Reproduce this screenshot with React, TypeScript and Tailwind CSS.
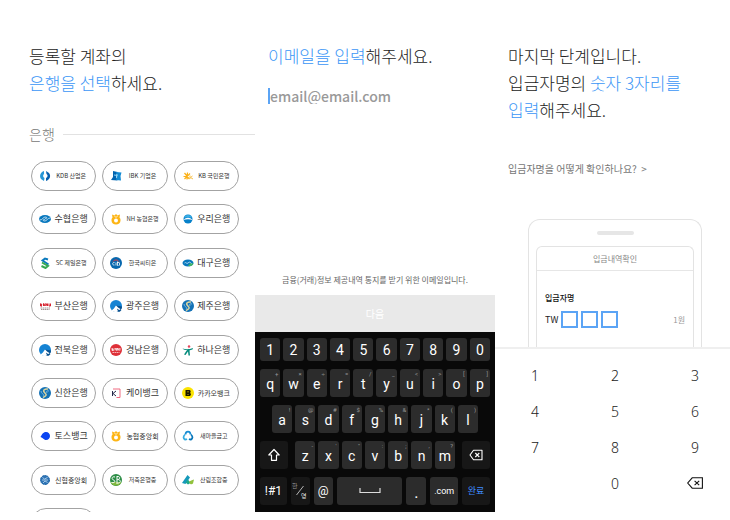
import type { ReactNode } from "react";
import clsx from "clsx";

type Bank = {
  name: string;
  size: "lg" | "md" | "sm";
  logo: ReactNode;
};

const textSizes = {
  lg: "text-[9px]",
  md: "text-[7px]",
  sm: "text-[6px]",
};

function Logo({ children }: { children: ReactNode }) {
  return (
    <svg viewBox="0 0 24 24" className="h-3 w-3 shrink-0" aria-hidden="true">
      {children}
    </svg>
  );
}

const nhLogo = (
  <Logo>
    <path
      d="M4 3l5 2 3-3 3 3 5-2-1 6c2 2 2 4 2 6 0 5-4 8-9 8s-9-3-9-8c0-2 0-4 2-6z"
      fill="#fdb515"
    />
    <circle cx="12" cy="15" r="4" fill="#fff" />
    <path d="M9 6l3 3 3-3" stroke="#fff" strokeWidth="1.5" fill="none" />
  </Logo>
);

const jbLogo = (
  <Logo>
    <circle cx="12" cy="12" r="12" fill="#1583d3" />
    <path d="M12 11l12 2c0 6-5 11-11 11z" fill="#07508f" />
    <path d="M3 21c4-2 6-6 9-10 3 3 5 5 9 7-2 3-4 5-8 6-4 0-7-1-10-3z" fill="#fff" />
    <path d="M14 17c2 2 5 3 9 4l-5 3c-2-2-4-4-4-7z" fill="#07508f" />
  </Logo>
);

const shinhanLogo = (
  <Logo>
    <circle cx="12" cy="12" r="12" fill="#1472b6" />
    <path
      d="M18 4C11 3 7 7 11 11s6 6-3 10"
      stroke="#d9d4a0"
      strokeWidth="3"
      fill="none"
    />
    <path d="M4 8c0 5 5 5 6 10M20 8c-4-1-6 0-4 4" stroke="#9ccbe8" strokeWidth="1.5" fill="none" />
  </Logo>
);

const banks: Bank[] = [
  {
    name: "KDB 산업은",
    size: "sm",
    logo: (
      <Logo>
        <path d="M10 2C3 4 0 12 4 18l6 4 1-6c-3-2-4-5-1-8z" fill="#2596d6" />
        <path d="M14 2l6 4c5 6 1 14-6 16v-6c4-2 4-6 1-8z" fill="#075fae" />
      </Logo>
    ),
  },
  {
    name: "IBK 기업은",
    size: "sm",
    logo: (
      <Logo>
        <path d="M6 2l9 2-3 8 3 9-13-1 4-6z" fill="#0064b0" />
        <path d="M12 4l11 1-2 7 1 9-10-1 2-7z" fill="#128bd4" />
        <path d="M8 10l7 1M14 8l-1 8" stroke="#8fd3f5" strokeWidth="2" />
      </Logo>
    ),
  },
  {
    name: "KB 국민은행",
    size: "sm",
    logo: (
      <Logo>
        <path
          d="M3 13h8M5 6l5 6M11 5l-1 14M16 7l-6 6M5 18l5-5M10 13l5 5"
          stroke="#fbb117"
          strokeWidth="2.4"
        />
        <path d="M16 11v7M21 12l-4 3 5 3" stroke="#f7c14b" strokeWidth="2" fill="none" />
      </Logo>
    ),
  },
  {
    name: "수협은행",
    size: "lg",
    logo: (
      <Logo>
        <ellipse cx="12" cy="12" rx="12" ry="8" fill="#0878be" />
        <path
          d="M1 14c6 1 7-7 13-6 3 1 1 4-2 3M23 10c-6-1-7 7-13 6-3-1-1-4 2-3"
          stroke="#fff"
          strokeWidth="1.4"
          fill="none"
        />
      </Logo>
    ),
  },
  { name: "NH 농협은행", size: "sm", logo: nhLogo },
  {
    name: "우리은행",
    size: "lg",
    logo: (
      <Logo>
        <circle cx="12" cy="12" r="9" fill="#0781ca" />
        <path d="M4 9a9 9 0 0 1 16 0z" fill="#38aee6" />
        <path d="M3 14c5-6 13-6 18 0-5-2-13-2-18 0z" fill="#fff" />
      </Logo>
    ),
  },
  {
    name: "SC 제일은행",
    size: "sm",
    logo: (
      <Logo>
        <path d="M18 5l-6-2-5 4 12 8" stroke="#0a79bd" strokeWidth="4" fill="none" />
        <path d="M6 11l12 7-5 4-8-4" stroke="#36a852" strokeWidth="4" fill="none" />
      </Logo>
    ),
  },
  {
    name: "한국씨티은",
    size: "sm",
    logo: (
      <Logo>
        <circle cx="12" cy="12" r="12" fill="#0768ae" />
        <path d="M6 9c3-4 9-4 12 0" stroke="#e63b43" strokeWidth="2" fill="none" />
        <path d="M9 11c-5-1-5 6 0 5M12 11v6M15 9v8h2M14 11h4M19 11v6" stroke="#fff" strokeWidth="1.6" fill="none" />
      </Logo>
    ),
  },
  {
    name: "대구은행",
    size: "lg",
    logo: (
      <Logo>
        <ellipse cx="12" cy="12" rx="11" ry="7" fill="#0877bd" />
        <path d="M12 18c5 1 10-1 11-5l-6-1z" fill="#42b565" />
        <path d="M5 12c3-3 4 3 7 0s4-2 7 1" stroke="#b5dff4" strokeWidth="1.8" fill="none" />
      </Logo>
    ),
  },
  {
    name: "부산은행",
    size: "lg",
    logo: (
      <Logo>
        <path
          d="M3 7v5h3l-3-2h3l-2-3M9 12V7l3 5V7M14 12V7l3 5V7M20 7v5h3V7"
          stroke="#d6232f"
          strokeWidth="2"
          fill="none"
        />
        <path d="M3 16h19M4 19h17" stroke="#8c7a78" strokeWidth="1.6" strokeDasharray="3 1" />
      </Logo>
    ),
  },
  { name: "광주은행", size: "lg", logo: jbLogo },
  { name: "제주은행", size: "lg", logo: shinhanLogo },
  { name: "전북은행", size: "lg", logo: jbLogo },
  {
    name: "경남은행",
    size: "lg",
    logo: (
      <Logo>
        <circle cx="12" cy="12" r="12" fill="#de3038" />
        <path
          d="M4 8v5h3l-3-2h3l-2-3M10 13V8l3 5V8M15 13V8l3 5V8M20 8v5"
          stroke="#fff"
          strokeWidth="1.4"
          fill="none"
        />
        <path d="M5 17h14" stroke="#f5b3b5" strokeWidth="2" strokeDasharray="3 1" />
      </Logo>
    ),
  },
  {
    name: "하나은행",
    size: "lg",
    logo: (
      <Logo>
        <circle cx="14" cy="5" r="2.5" fill="#e4475c" />
        <path d="M1 9c7 2 13 2 21-1l-1 3c-3 1-5 1-6 2l1 10h-3l-1-8-5 7-3-1 6-9c-4 0-7-1-9-3z" fill="#078c7d" />
      </Logo>
    ),
  },
  { name: "신한은행", size: "lg", logo: shinhanLogo },
  {
    name: "케이뱅크",
    size: "lg",
    logo: (
      <Logo>
        <path d="M6 4h14v17h-7" stroke="#f06a80" strokeWidth="2" fill="none" />
        <path d="M5 8v10M12 8l-6 5 6 5" stroke="#252a4a" strokeWidth="2" fill="none" />
      </Logo>
    ),
  },
  {
    name: "카카오뱅크",
    size: "md",
    logo: (
      <Logo>
        <circle cx="12" cy="12" r="12" fill="#fbe300" />
        <path d="M7 6h8c3 0 3 5 1 6 3 1 2 6-1 6H7z" fill="#191600" />
        <path d="M12 8v3M12 14v2" stroke="#fbe300" strokeWidth="1.5" />
      </Logo>
    ),
  },
  {
    name: "토스뱅크",
    size: "lg",
    logo: (
      <Logo>
        <path d="M3 14C6 9 8 4 14 4c5 0 8 4 8 8s-3 8-8 8c-4 0-5-4-11-6z" fill="#0b45f2" />
      </Logo>
    ),
  },
  { name: "농협중앙회", size: "md", logo: nhLogo },
  {
    name: "새마을금고",
    size: "sm",
    logo: (
      <Logo>
        <path d="M7 9c0-8 10-8 10 0" stroke="#168bd2" strokeWidth="3.5" fill="none" />
        <path d="M6 9c-6 6-1 12 4 9" stroke="#35abe0" strokeWidth="3.5" fill="none" />
        <path d="M18 9c6 6 1 12-4 9" stroke="#0876ba" strokeWidth="3.5" fill="none" />
      </Logo>
    ),
  },
  {
    name: "신협중앙회",
    size: "md",
    logo: (
      <Logo>
        <circle cx="12" cy="12" r="9" fill="#2f74b5" stroke="#1762a7" strokeWidth="2" strokeDasharray="4 1" />
        <path d="M7 7l4 3 6-3M6 12h12M8 18l4-4 5 3" stroke="#cae2f4" strokeWidth="1.5" fill="none" />
      </Logo>
    ),
  },
  {
    name: "저축은행중",
    size: "sm",
    logo: (
      <Logo>
        <circle cx="12" cy="12" r="12" fill="#2c8d46" />
        <path d="M1 16a12 12 0 0 0 22 0z" fill="#80b83c" />
        <path
          d="M10 6C3 4 3 11 7 12s4 7-4 5M14 4v16M14 5c7-1 7 6 1 6 8 0 7 8 0 7"
          stroke="#fff"
          strokeWidth="2"
          fill="none"
        />
      </Logo>
    ),
  },
  {
    name: "산림조합중",
    size: "sm",
    logo: (
      <Logo>
        <path d="M0 18L11 2l5 5L7 20z" fill="#1599ba" />
        <path d="M12 11l5 7-5 3-5-4z" fill="#1da98f" />
        <path d="M14 15c4-1 5-3 10-4l-2 8c-3 3-6 2-8-4z" fill="#91c23d" />
      </Logo>
    ),
  },
];

const keyRows = {
  top: ["q+", "w×", "e÷", "r=", "t/", "y_", "u<", "i>", "o[", "p]"],
  middle: ["a!", "s@", "d#", "f$", "g%", "h&", "j*", "k(", "l)"],
  bottom: ["z-", "x'", 'c"', "v:", "b;", "n,", "m?"],
};

type KeyProps = {
  children: ReactNode;
  hint?: string;
  dark?: boolean;
  label?: string;
  className?: string;
};

function Key({ children, hint, dark, label, className }: KeyProps) {
  return (
    <button
      type="button"
      aria-label={label}
      className={clsx(
        "relative flex min-w-0 items-center justify-center rounded-[3px] leading-4 text-white",
        dark ? "bg-[#171717]" : "bg-[#2c2c2c]",
        className ?? "h-7 flex-1 text-[14px]",
      )}
    >
      {children}
      {hint && (
        <span className="absolute right-[2px] top-[1px] text-[6px] leading-[7px] text-[#9a9a9a]">
          {hint}
        </span>
      )}
    </button>
  );
}

function LetterKeys({ keys }: { keys: string[] }) {
  return (
    <>
      {keys.map((key) => (
        <Key key={key} hint={key[1]}>
          <span className="pt-[2px]">{key[0]}</span>
        </Key>
      ))}
    </>
  );
}

function Keyboard() {
  return (
    <div className="flex flex-col gap-2 bg-[#090909] px-[5px] pb-[7px] pt-[6px] font-['Roboto','Noto_Sans_CJK_KR',sans-serif]">
      <div className="flex gap-[3px]">
        {["1", "2", "3", "4", "5", "6", "7", "8", "9", "0"].map((n) => (
          <Key key={n} className="h-[23px] flex-1 text-[14px]">
            {n}
          </Key>
        ))}
      </div>
      <div className="flex gap-[3px]">
        <LetterKeys keys={keyRows.top} />
      </div>
      <div className="flex gap-[3px] px-3">
        <LetterKeys keys={keyRows.middle} />
      </div>
      <div className="flex gap-[7px]">
        <Key dark label="Shift" className="h-7 w-7 shrink-0">
          <svg viewBox="0 0 14 14" className="h-[14px] w-[14px]" fill="none" stroke="white" strokeWidth="1.2" strokeLinejoin="round">
            <path d="M7 1.5L1.8 7h2.7v5.3h5V7h2.7z" />
          </svg>
        </Key>
        <div className="flex flex-1 gap-[3px]">
          <LetterKeys keys={keyRows.bottom} />
        </div>
        <Key dark label="Backspace" className="h-7 w-7 shrink-0">
          <svg viewBox="0 0 14 12" className="h-3 w-[14px]" fill="none" stroke="white" strokeWidth="1.1" strokeLinejoin="round">
            <path d="M4.5 1.2H13v9.6H4.5L1 6z" />
            <path d="M6.3 4l4 4M10.3 4l-4 4" />
          </svg>
        </Key>
      </div>
      <div className="grid grid-cols-[27fr_19fr_19fr_66fr_20fr_28fr_28fr] gap-1">
        <Key dark className="h-7 text-[12px]">!#1</Key>
        <Key dark label="한/영" className="h-7">
          <svg viewBox="0 0 16 16" className="h-4 w-4" aria-hidden="true">
            <path d="M11.5 3L4.5 12" stroke="#ddd" strokeWidth="0.8" />
            <text x="0" y="5" fontSize="6" fill="#999">한</text>
            <text x="9" y="15" fontSize="6" fill="#eee">영</text>
          </svg>
        </Key>
        <Key className="h-7 text-[12px]">@</Key>
        <Key label="Space" className="h-7">
          <svg viewBox="0 0 22 6" className="h-[6px] w-[22px]" fill="none" stroke="#ddd" strokeWidth="1.2">
            <path d="M1 0v4.5h20V0" />
          </svg>
        </Key>
        <Key className="h-7 text-[16px]">
          <span className="pt-1">.</span>
        </Key>
        <Key className="h-7 text-[9px]">.com</Key>
        <Key dark className="h-7 text-[9px]">
          <span className="text-[#3f8cff]">완료</span>
        </Key>
      </div>
    </div>
  );
}

function Title({ children }: { children: ReactNode }) {
  return (
    <h1 className="whitespace-nowrap text-[17px] font-light leading-[27px] text-[#222]">
      {children}
    </h1>
  );
}

function Accent({ children }: { children: ReactNode }) {
  return <span className="text-[#3b96f6]">{children}</span>;
}

const chipClass =
  "flex h-[30px] items-center justify-center gap-[3px] rounded-full border border-[#a3a3a3] text-[#333]";

function BankSelect() {
  return (
    <section className="h-0 min-h-full overflow-hidden pt-[42px]">
      <div className="px-[14px]">
        <Title>
          등록할 계좌의
          <br />
          <Accent>은행을 선택</Accent>하세요.
        </Title>
      </div>
      <div className="mt-7 flex items-center gap-2 pl-[14px]">
        <h2 className="text-[14px] font-light leading-5 text-[#777]">은행</h2>
        <div className="h-px flex-1 bg-[#e2e2e2]" />
      </div>
      <div className="mt-[17px] grid h-[377px] grid-cols-3 content-between gap-x-[6px] px-4">
        {banks.map((bank) => (
          <button key={bank.name} type="button" className={chipClass}>
            {bank.logo}
            <span
              className={clsx(
                "w-[34px] whitespace-nowrap text-center leading-3",
                textSizes[bank.size],
              )}
            >
              {bank.name}
            </span>
          </button>
        ))}
        <button type="button" aria-label="더보기" className={chipClass} />
      </div>
    </section>
  );
}

function EmailForm() {
  return (
    <section className="flex flex-col pt-[42px]">
      <div className="px-[13px]">
        <Title>
          <Accent>이메일을 입력</Accent>해주세요.
        </Title>
        <input
          type="email"
          aria-label="이메일"
          placeholder="email@email.com"
          className="mt-[19px] block h-4 w-full border-l-2 border-[#5ba4f5] text-[14px] font-medium leading-4 outline-none placeholder:text-[#999]"
        />
      </div>
      <p className="mt-[168px] whitespace-nowrap text-center text-[8px] leading-4 text-[#666]">
        금융(거래)정보 제공내역 통지를 받기 위한 이메일입니다.
      </p>
      <button type="button" className="mt-[7px] h-[37px] bg-[#e9e9e9] text-[10px] text-white">
        다음
      </button>
      <Keyboard />
    </section>
  );
}

function DepositCode() {
  return (
    <section className="flex flex-col pt-[42px]">
      <div className="px-[13px]">
        <Title>
          마지막 단계입니다.
          <br />
          입금자명의 <Accent>숫자 3자리를</Accent>
          <br />
          <Accent>입력</Accent>해주세요.
        </Title>
        <a href="#help" className="mt-[38px] block whitespace-pre text-[10px] leading-4 text-[#777]">
          {"입금자명을 어떻게 확인하나요?  >"}
        </a>
      </div>

      <div className="mt-[42px] h-32 overflow-hidden px-[33px]">
        <div className="rounded-t-[12px] border border-b-0 border-[#e3e3e3] px-[7px] pt-[11px]">
          <div className="mx-auto h-1 w-[37px] rounded-full bg-[#e6e6e6]" />
          <div className="mt-[11px] h-[101px] rounded-t-[6px] border border-b-0 border-[#e3e3e3]">
            <h2 className="border-b border-[#e6e6e6] text-center text-[8px] leading-[23px] text-[#888]">
              입금내역확인
            </h2>
            <div className="px-2 pt-[21px] text-[8px] leading-3">
              <p className="font-medium text-[#111]">입금자명</p>
              <div className="mt-[7px] flex items-center gap-[3px]">
                <span className="text-[9px] text-[#222]">TW</span>
                {[1, 2, 3].map((n) => (
                  <input
                    key={n}
                    aria-label={`숫자 ${n}`}
                    inputMode="numeric"
                    maxLength={1}
                    className="h-[17px] w-[17px] border-2 border-[#5ba4f5] text-center outline-none"
                  />
                ))}
                <span className="ml-auto text-[#999]">1원</span>
              </div>
            </div>
          </div>
        </div>
      </div>

      <div className="grid grid-cols-3 border-t-2 border-[#efefef] pb-px pt-2 font-['Noto_Sans',sans-serif] text-[14px] font-light text-[#222]">
        {["1", "2", "3", "4", "5", "6", "7", "8", "9"].map((n) => (
          <button key={n} type="button" className="h-9">
            {n}
          </button>
        ))}
        <button type="button" className="col-start-2 h-9">
          0
        </button>
        <button type="button" aria-label="지우기" className="flex h-9 items-center justify-center">
          <svg viewBox="0 0 16 12" className="h-3 w-4" fill="none" stroke="#111" strokeWidth="1.1">
            <path d="M5.2 0.8h10.2v10.4H5.2L0.7 6z" />
            <path d="M7.6 3.8l4.6 4.4M12.2 3.8L7.6 8.2" />
          </svg>
        </button>
      </div>
    </section>
  );
}

export default function App() {
  return (
    <main className="overflow-hidden bg-white font-['Noto_Sans_CJK_KR',sans-serif]">
      <div className="-mr-[5px] ml-[15px] grid grid-cols-3">
        <BankSelect />
        <EmailForm />
        <DepositCode />
      </div>
    </main>
  );
}
